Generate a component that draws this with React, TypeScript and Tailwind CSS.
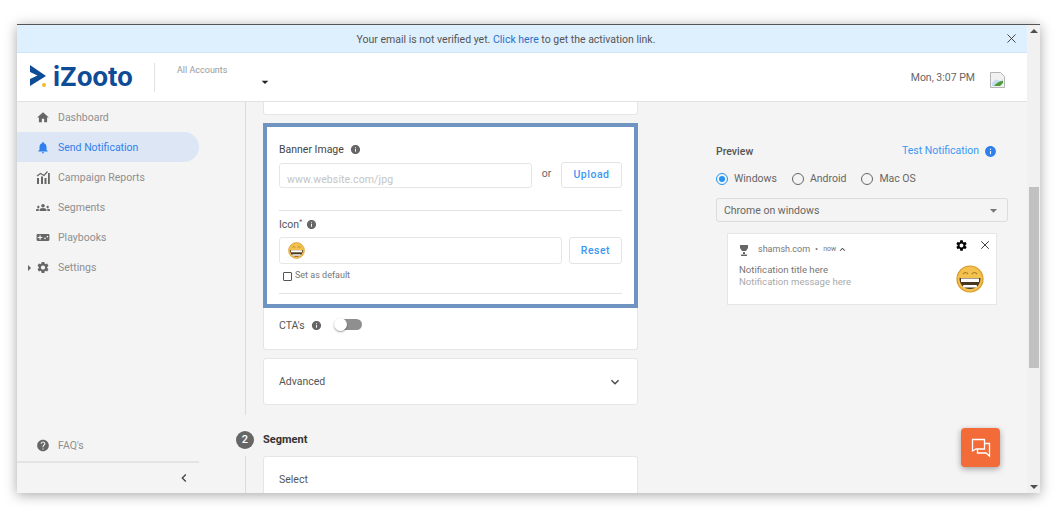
import { MdHome, MdNotifications, MdGroups, MdVideogameAsset, MdSettings, MdHelp, MdInfo, MdArrowDropDown, MdExpandMore, MdExpandLess, MdChevronLeft } from "react-icons/md";
import { X } from "lucide-react";
import type { ReactNode } from "react";

const ReportsIcon = () => (
  <svg width="14" height="14" viewBox="0 0 14 14" fill="currentColor">
    <path d="M1 8h2v6H1zM5 6.500h2V14H5zM8.500 8h2v6h-2zM12 3h1.800v11H12z" />
    <path d="M1 6l3.500-2.500L8 5.500l3.500-4" fill="none" stroke="currentColor" strokeWidth="1.200" />
  </svg>
);

// grinning emoji used for the icon field and the preview
const Grin = ({ size }: { size: number }) => (
  <svg width={size} height={size} viewBox="0 0 28 28">
    <circle cx="14" cy="14" r="13" fill="#f2c14e" stroke="#d9982a" strokeWidth="1.200" />
    <path d="M3.500 13h21c0 7-4.500 11-10.500 11S3.500 20 3.500 13z" fill="#4a3520" />
    <rect x="5" y="13.500" width="18" height="3.500" fill="#fff" />
    <rect x="7" y="20" width="14" height="2.500" rx="1" fill="#fff" />
    <path d="M7 9q2.500-3 5 0M16 9q2.500-3 5 0" fill="none" stroke="#a87a2a" strokeWidth="1.200" />
  </svg>
);

const ChatIcon = () => (
  <svg width="20" height="20" viewBox="0 0 20 20" fill="none" stroke="#fff" strokeWidth="1.300">
    <path d="M1.500 1.500h12v9.500H5L1.500 13z" />
    <path d="M13.500 5.500h5V18l-3.500-3H6.500v-4" />
  </svg>
);

const BrokenImage = () => (
  <svg width="15" height="16" viewBox="0 0 15 16">
    <path d="M.5.500h10l4 4v11H.5z" fill="#f1f1f1" stroke="#b5b5b5" />
    <path d="M2 11q3-5 6-3t5-1v3l-3 4H2z" fill="#c5dcef" />
    <path d="M4 14q4-5 9-5v2l-3 3z" fill="#4f9a3a" />
  </svg>
);

const NavItem = ({ icon, label, active }: { icon: ReactNode; label: string; active?: boolean }) => (
  <div
    className={`h-[30px] w-[182px] flex items-center pl-[19px] gap-[8px] rounded-r-full ${
      active ? "bg-[#dce6f5] text-[#2f80ed]" : "text-[#8f8f8f]"
    }`}
  >
    <span className={`w-[14px] flex justify-center ${active ? "text-[#2f80ed]" : "text-[#666]"}`}>{icon}</span>
    <span className="text-[10.5px] pt-[1px]">{label}</span>
  </div>
);

const Radio = ({ label, checked }: { label: string; checked?: boolean }) => (
  <div className="flex items-center gap-[6px]">
    <span
      className={`w-[12px] h-[12px] rounded-full border-[1.5px] flex items-center justify-center ${
        checked ? "border-[#2196f3]" : "border-[#666]"
      }`}
    >
      {checked && <span className="w-[6px] h-[6px] rounded-full bg-[#2196f3]" />}
    </span>
    <span className="text-[10.5px] text-[#666]">{label}</span>
  </div>
);

const OutlineButton = ({ label, className }: { label: string; className: string }) => (
  <div
    className={`bg-white border border-[#e4e4e4] rounded-[3px] flex items-center justify-center text-[10.5px] font-medium tracking-[0.5px] text-[#3b97f3] ${className}`}
  >
    {label}
  </div>
);

export default function App() {
  return (
    <div className="w-[1063px] h-[517px] bg-white overflow-hidden pt-[24px] pl-[17px] font-['Roboto',sans-serif]">
      <div className="w-[1023px] h-[469px] flex border-t border-t-[#555] shadow-[0_2px_12px_rgba(0,0,0,0.35)]">
        <div className="w-[1010px] flex flex-col">
          {/* Verify banner */}
          <div className="h-[28px] shrink-0 bg-[#deeffe] border-b border-[#cfe5fb] flex items-center relative justify-center pr-[32px] text-[10.5px] text-[#555]">
            <span className="mt-[2px]">
              Your email is not verified yet. <span className="text-[#2a6fc9]">Click here</span> to get the activation link.
            </span>
            <X size={15} strokeWidth={1.6} className="absolute right-[8px] top-[6px] text-[#444]" />
          </div>

          {/* Header */}
          <div className="h-[49px] shrink-0 bg-white border-b border-[#e2e2e2] flex">
            <div className="w-[137px] flex items-center pl-[13px] gap-[1px] pb-[1px] shrink-0">
              <svg width="22" height="24" viewBox="0 0 22 24" className="shrink-0">
                <path d="M0 0l16 11L0 21v-7l7.500-3.500L0 7z" fill="#0f4c97" />
                <circle cx="14" cy="20" r="2" fill="#f5b82e" />
              </svg>
              <span className="text-[26px] font-bold leading-none text-[#0f4c97] font-['Inter',sans-serif] tracking-[-0.3px]">iZooto</span>
            </div>
            <div className="w-px h-[29px] mt-[10px] bg-[#e2e2e2]" />
            <div className="w-[120px] pl-[22px] pt-[10px] relative text-[9px] text-[#9a9a9a] leading-[14px]">
              All Accounts
              <MdArrowDropDown size={16} className="absolute left-[102px] top-[21px] text-[#222]" />
            </div>
            <div className="flex-1 flex justify-end items-start pt-[19px] pr-[22px]">
              <span className="text-[10.5px] text-[#666] leading-[13px] mr-[15px] -mt-[1px]">Mon, 3:07 PM</span>
              <BrokenImage />
            </div>
          </div>

          {/* Body */}
          <div className="flex-1 min-h-0 flex bg-[#f4f4f4] overflow-hidden">
            {/* Sidebar */}
            <div className="w-[219px] shrink-0 flex flex-col">
              <NavItem icon={<MdHome size={15} />} label="Dashboard" />
              <NavItem icon={<MdNotifications size={15} />} label="Send Notification" active />
              <NavItem icon={<ReportsIcon />} label="Campaign Reports" />
              <NavItem icon={<MdGroups size={15} />} label="Segments" />
              <NavItem icon={<MdVideogameAsset size={15} />} label="Playbooks" />
              <div className="relative">
                <NavItem icon={<MdSettings size={15} />} label="Settings" />
                <span className="absolute left-[11px] top-[13px] w-0 h-0 border-y-[3px] border-y-transparent border-l-[3px] border-l-[#666]" />
              </div>
              <div className="mt-auto w-[182px]">
                <div className="mb-[1px]">
                  <NavItem icon={<MdHelp size={15} />} label="FAQ's" />
                </div>
                <div className="h-[32px] border-t-2 border-[#e4e4e4] flex items-center justify-end pr-[7px] text-[#444]">
                  <MdChevronLeft size={16} />
                </div>
              </div>
            </div>

            {/* Step rail */}
            <div className="w-[18px] shrink-0 flex flex-col items-center">
              <div className="w-px h-[313px] bg-[#dcdcdc]" />
              <div className="mt-[16px] w-[18px] h-[18px] shrink-0 rounded-full bg-[#666] text-white text-[11px] font-medium flex items-center justify-center">2</div>
              <div className="mt-[7px] w-px flex-1 bg-[#dcdcdc]" />
            </div>

            {/* Form column */}
            <div className="w-[375px] ml-[9px] shrink-0 flex flex-col">
              <div className="h-[13px] shrink-0 bg-white border border-t-0 border-[#e6e6e6] rounded-b-[3px]" />

              <div className="mt-[8px] h-[185px] shrink-0 bg-white border-[4px] border-[#6f94c2] px-[12px] pt-[16px]">
                <div className="flex items-center gap-[6px] h-[13px] text-[10.5px] text-[#444]">
                  Banner Image <MdInfo size={11} className="text-[#666]" />
                </div>
                <div className="flex mt-[6px] h-[26px]">
                  <div className="w-[253px] h-[25px] mt-[1px] border border-[#e6e6e6] rounded-[3px] flex items-end pl-[7px] text-[10.5px] leading-[14px] tracking-[0.1px] text-[#c4c4c4]">
                    www.website.com/jpg
                  </div>
                  <span className="w-[29px] text-center text-[10.5px] text-[#666] leading-[24px]">or</span>
                  <OutlineButton label="Upload" className="w-[61px]" />
                </div>
                <div className="mt-[22px] h-px bg-[#e2e2e2]" />
                <div className="mt-[7px] flex items-center gap-[4px] h-[13px] text-[10.5px] text-[#555]">
                  <span>
                    Icon<sup className="text-[7px]">*</sup>
                  </span>
                  <MdInfo size={11} className="text-[#666]" />
                </div>
                <div className="flex mt-[6px] h-[27px] justify-between">
                  <div className="w-[283px] border border-[#e6e6e6] rounded-[3px] flex items-center pl-[8px]">
                    <Grin size={17} />
                  </div>
                  <OutlineButton label="Reset" className="w-[53px]" />
                </div>
                <div className="mt-[6px] ml-[4px] flex items-center gap-[3px] h-[12px] text-[9px] text-[#777]">
                  <span className="w-[9px] h-[9px] border border-[#555] rounded-[1px]" />
                  Set as default
                </div>
                <div className="mt-[11px] h-px bg-[#e2e2e2]" />
              </div>

              <div className="h-[42px] shrink-0 bg-white border border-t-0 border-[#e6e6e6] rounded-b-[3px] flex items-start pl-[15px] pt-[11px]">
                <span className="text-[10.5px] text-[#555] leading-[13px]">CTA's</span>
                <MdInfo size={11} className="text-[#666] ml-[6px] mt-[1px]" />
                <div className="relative ml-[12px] w-[28px] h-[12px]">
                  <span className="absolute left-[2px] top-0 w-[26px] h-[11px] rounded-full bg-[#8f8f8f]" />
                  <span className="absolute left-0 top-[-1px] w-[13px] h-[13px] rounded-full bg-white shadow-[0_1px_2px_rgba(0,0,0,0.4)]" />
                </div>
              </div>

              <div className="mt-[8px] h-[47px] shrink-0 bg-white border border-[#e6e6e6] rounded-[3px] flex items-center justify-between pl-[15px] pr-[14px]">
                <span className="text-[10.5px] text-[#555] pt-[1px]">Advanced</span>
                <MdExpandMore size={16} className="text-[#444]" />
              </div>

              <div className="mt-[28px] h-[14px] shrink-0 flex items-center text-[11px] font-bold text-[#333]">Segment</div>
              <div className="mt-[9px] flex-1 bg-white border border-b-0 border-[#e6e6e6] rounded-t-[3px] pl-[15px] pt-[16px] text-[10.5px] text-[#555] leading-[14px]">
                Select
              </div>
            </div>

            {/* Preview */}
            <div className="relative flex-1 pl-[78px] pt-[43px]">
              <div className="w-[281px] flex items-center justify-between h-[14px]">
                <span className="text-[10.5px] font-medium text-[#555]">Preview</span>
                <span className="flex items-center gap-[5px] text-[10.5px] text-[#3b97f3] -mt-[2px]">
                  Test Notification <MdInfo size={13} className="text-[#2f80ed]" />
                </span>
              </div>
              <div className="mt-[13px] flex gap-[15px] h-[14px] items-center">
                <Radio label="Windows" checked />
                <Radio label="Android" />
                <Radio label="Mac OS" />
              </div>
              <div className="mt-[12px] w-[292px] h-[24px] border border-[#dcdcdc] rounded-[3px] flex items-center justify-between pl-[7px] pr-[5px] text-[10.5px] text-[#666]">
                <span className="pt-[1px]">Chrome on windows</span>
                <MdArrowDropDown size={17} className="text-[#777]" />
              </div>
              <div className="mt-[11px] ml-[11px] w-[270px] h-[72px] bg-white border border-[#e6e6e6] relative pl-[11px] pt-[9px]">
                <div className="flex items-center h-[12px] text-[#777] pt-[1px]">
                  <svg width="10" height="12" viewBox="0 0 10 12" className="mr-[9px]">
                    <path d="M1 1h8v3l-2 3H3L1 4zM4 8h2v2H4zM2 10.500h6V12H2z" fill="#666" />
                  </svg>
                  <span className="text-[9px]">shamsh.com</span>
                  <span className="text-[9px] mx-[5px]">•</span>
                  <span className="text-[7px]">now</span>
                  <MdExpandLess size={11} className="ml-[1px] text-[#444]" />
                </div>
                <div className="mt-[8px] text-[9.6px] leading-[13px] text-[#777]">Notification title here</div>
                <div className="text-[9.6px] leading-[12px] text-[#aaa]">Notification message here</div>
                <MdSettings size={13} className="absolute right-[28px] top-[5px] text-black" />
                <X size={14} strokeWidth={1.5} className="absolute right-[4px] top-[4px] text-[#222]" />
                <span className="absolute right-[12px] top-[31px] flex">
                  <Grin size={28} />
                </span>
              </div>
              <div className="absolute left-[323px] top-[326px] w-[39px] h-[39px] rounded-[4px] bg-[#f26b38] shadow-[0_2px_6px_rgba(0,0,0,0.35)] flex items-center justify-center">
                <ChatIcon />
              </div>
            </div>
          </div>
        </div>

        {/* Scrollbar */}
        <div className="w-[13px] bg-[#f1f1f1] flex flex-col items-center pt-[4px] pb-[4px]">
          <span className="w-0 h-0 border-x-[4px] border-x-transparent border-b-[4px] border-b-[#505050]" />
          <span className="mt-[154px] w-[10px] h-[181px] bg-[#c1c1c1]" />
          <span className="mt-auto w-0 h-0 border-x-[4px] border-x-transparent border-t-[4px] border-t-[#505050]" />
        </div>
      </div>
    </div>
  );
}
